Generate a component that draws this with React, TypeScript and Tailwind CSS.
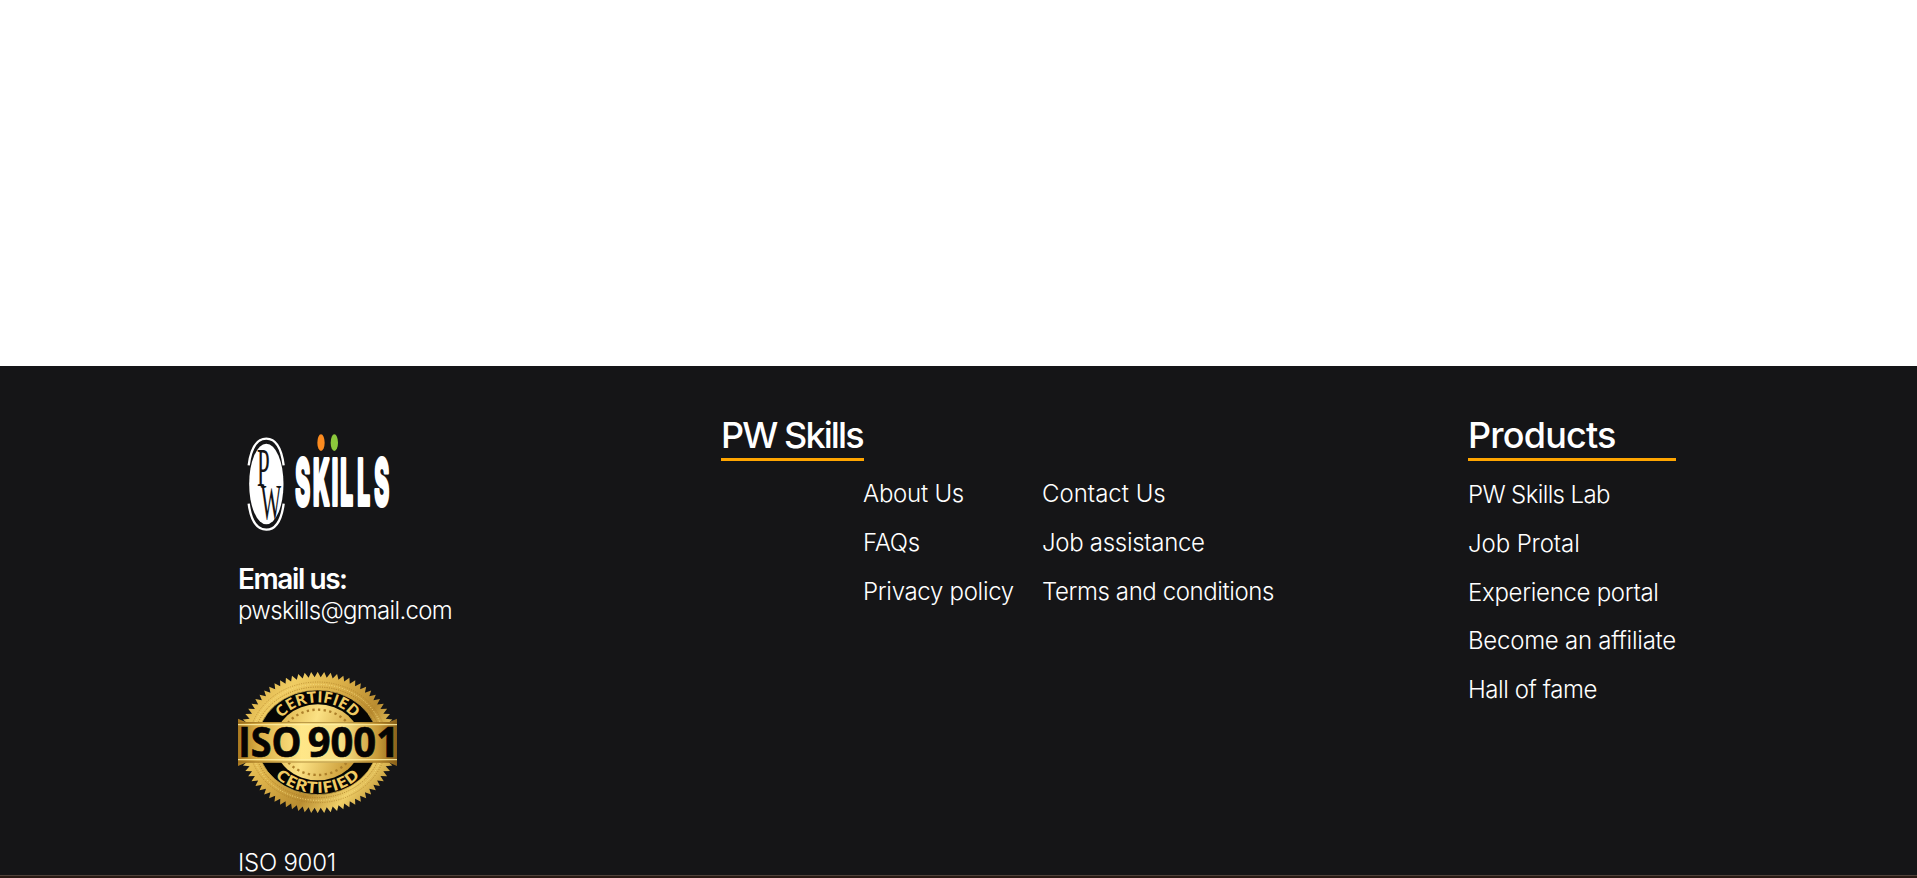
const TEETH = 76;

const sealPoints = Array.from({ length: TEETH * 2 }, (_, i) => {
  const angle = (Math.PI * i) / TEETH - Math.PI / 2;
  const scale = i % 2 === 0 ? 1 : 0.925;
  const x = 278 + 237 * scale * Math.cos(angle);
  const y = 247.5 + 212 * scale * Math.sin(angle);
  return `${x.toFixed(1)},${y.toFixed(1)}`;
}).join(" ");

function Logo() {
  return (
    <svg className="block h-[120px] w-[160px]" viewBox="54 30 480 360" role="img" aria-label="PW Skills">
      <ellipse cx="139" cy="222" rx="51.5" ry="121" fill="#fff" />
      <g fill="none" stroke="#fff" strokeWidth="7">
        <path d="M86 166 C93 112 113 86 139 86 C165 86 184 112 191 166" />
        <path d="M86 281 C93 334 113 359 139 359 C165 359 184 334 191 281" />
      </g>
      <g fill="#151517" fontFamily="Liberation Serif, serif">
        <text transform="translate(111 228) scale(0.42 1)" fontSize="163">P</text>
        <text transform="translate(122 327) scale(0.42 1)" fontSize="154">W</text>
      </g>
      <ellipse cx="303" cy="98" rx="11" ry="25" fill="#fb8b20" />
      <ellipse cx="343" cy="98" rx="11" ry="25" fill="#8cc83c" />
      <text
        transform="translate(0 284) scale(0.36 1)"
        x="628 776 931 1003 1144 1286"
        fontFamily="Inter, sans-serif"
        fontSize="188"
        fontWeight="800"
        fill="#fff"
        stroke="#fff"
        strokeWidth="12"
        strokeLinejoin="round"
      >
        SKILLS
      </text>
    </svg>
  );
}

function IsoBadge() {
  return (
    <svg className="block h-[141px] w-[159px]" viewBox="39 36 477 423" role="img" aria-label="ISO 9001 certified">
      <defs>
        <linearGradient id="gold" x1="0" y1="0.1" x2="1" y2="0.8">
          <stop offset="0" stopColor="#d0a23c" />
          <stop offset="0.22" stopColor="#f0cd63" />
          <stop offset="0.42" stopColor="#dcb149" />
          <stop offset="0.65" stopColor="#b98c30" />
          <stop offset="0.82" stopColor="#efcf68" />
          <stop offset="1" stopColor="#b58729" />
        </linearGradient>
        <linearGradient id="core" x1="0" y1="0" x2="1" y2="0.3">
          <stop offset="0" stopColor="#d9ad42" />
          <stop offset="0.5" stopColor="#fbe184" />
          <stop offset="1" stopColor="#cb9d38" />
        </linearGradient>
        <linearGradient id="band">
          <stop offset="0" stopColor="#a87820" />
          <stop offset="0.12" stopColor="#d9ac43" />
          <stop offset="0.4" stopColor="#ffe788" />
          <stop offset="0.65" stopColor="#f7df85" />
          <stop offset="0.88" stopColor="#c79a38" />
          <stop offset="1" stopColor="#8b611a" />
        </linearGradient>
        <path id="arc-top" d="M143 247 A135 120 0 0 1 413 247" />
        <path id="arc-bottom" d="M105 247 A173 152 0 0 0 451 247" />
      </defs>
      <polygon points={sealPoints} fill="url(#gold)" />
      <g fill="none">
        <ellipse cx="278" cy="247" rx="206" ry="181" stroke="#a87a27" strokeWidth="2" strokeDasharray="3 4" />
        <ellipse cx="278" cy="247" rx="199" ry="174" stroke="#f9df82" strokeWidth="3" strokeDasharray="3 5" />
        <ellipse cx="278" cy="247" rx="191" ry="166" stroke="#a67825" strokeWidth="2.5" strokeDasharray="3 4" />
      </g>
      <ellipse cx="278" cy="247" rx="181" ry="157" fill="#050503" stroke="#e5bd52" strokeWidth="2" />
      <ellipse cx="278" cy="247" rx="129" ry="114" fill="url(#core)" />
      <ellipse
        cx="278"
        cy="247"
        rx="111"
        ry="98"
        fill="none"
        stroke="#ad802b"
        strokeWidth="7"
        strokeDasharray="7 10"
      />
      <g fill="#f0ca62" fontFamily="Open Sans, sans-serif" fontSize="47" fontWeight="700">
        <text>
          <textPath href="#arc-top" startOffset="78" textLength="245" lengthAdjust="spacingAndGlyphs">
            CERTIFIED
          </textPath>
        </text>
        <text>
          <textPath href="#arc-bottom" startOffset="115" textLength="281" lengthAdjust="spacingAndGlyphs">
            CERTIFIED
          </textPath>
        </text>
      </g>
      <path d="M39 176 L62 186 H493 L516 176 V318 L493 308 H62 L39 318 Z" fill="url(#band)" />
      <path d="M39 188 H516 M39 306 H516" stroke="#8a5f16" strokeWidth="2" />
      <path d="M39 194 H516 M39 299 H516" stroke="#fff0a4" strokeWidth="3" />
      <g
        fontFamily="Open Sans, sans-serif"
        fontSize="121"
        fontWeight="700"
        fill="#050403"
        stroke="#050403"
        strokeWidth="2"
      >
        <text x="40" y="290" textLength="190" lengthAdjust="spacingAndGlyphs">
          ISO
        </text>
        <text x="248" y="290" textLength="274" lengthAdjust="spacingAndGlyphs">
          9001
        </text>
      </g>
    </svg>
  );
}

const aboutLinks = [
  { label: "About Us", tracking: "tracking-[-0.25px]" },
  { label: "FAQs", tracking: "tracking-[-0.3px]" },
  { label: "Privacy policy", tracking: "tracking-[-0.3px]" },
];

const supportLinks = [
  { label: "Contact Us", tracking: "tracking-[0px]" },
  { label: "Job assistance", tracking: "tracking-[-0.3px]" },
  { label: "Terms and conditions", tracking: "tracking-[-0.4px]" },
];

const productLinks = [
  { label: "PW Skills Lab", tracking: "tracking-[-0.63px]" },
  { label: "Job Protal", tracking: "tracking-[-0.1px]" },
  { label: "Experience portal", tracking: "tracking-[-0.3px]" },
  { label: "Become an affiliate", tracking: "tracking-[-0.25px]" },
  { label: "Hall of fame", tracking: "tracking-[-0.42px]" },
];

function LinkList({ links }: { links: { label: string; tracking: string }[] }) {
  return (
    <ul className="flex flex-col gap-[18.75px]">
      {links.map(({ label, tracking }) => (
        <li key={label} className={`leading-[30px] ${tracking}`}>
          {label}
        </li>
      ))}
    </ul>
  );
}

export default function App() {
  return (
    <div className="flex h-[878px] w-full flex-col overflow-hidden bg-white font-['Inter',sans-serif] text-2xl font-light whitespace-nowrap text-white">
      <div className="h-[366px] shrink-0" />
      <footer className="flex min-h-0 flex-1 bg-[#151517] pl-[238px]">
        <section className="w-[483px] shrink-0 pt-[54px]">
          <Logo />
          <h3 className="mt-[22px] text-[28px] leading-[34px] font-semibold tracking-[-1.42px]">Email us:</h3>
          <p className="leading-[30px] tracking-[-0.68px]">pwskills@gmail.com</p>
          <div className="mt-[46px]">
            <IsoBadge />
          </div>
          <p className="mt-[35px] h-[28px] leading-[30px] tracking-[-0.25px]">ISO 9001</p>
        </section>
        <section className="w-[747px] shrink-0 pt-[47px]">
          <h2 className="h-12 w-[143px] border-b-3 border-[#ffa500] text-4xl leading-[44px] font-medium tracking-[-1.9px]">
            PW Skills
          </h2>
          <div className="mt-[18px] flex pl-[142px]">
            <div className="w-[179px]">
              <LinkList links={aboutLinks} />
            </div>
            <LinkList links={supportLinks} />
          </div>
        </section>
        <section className="w-[208px] shrink-0 pt-[47px]">
          <h2 className="mb-[19px] h-12 border-b-3 border-[#ffa500] text-4xl leading-[44px] font-medium tracking-[-0.8px]">
            Products
          </h2>
          <LinkList links={productLinks} />
        </section>
      </footer>
      <div className="h-[3px] shrink-0 border-t border-[#51423a] bg-[#2a1a14]" />
    </div>
  );
}
